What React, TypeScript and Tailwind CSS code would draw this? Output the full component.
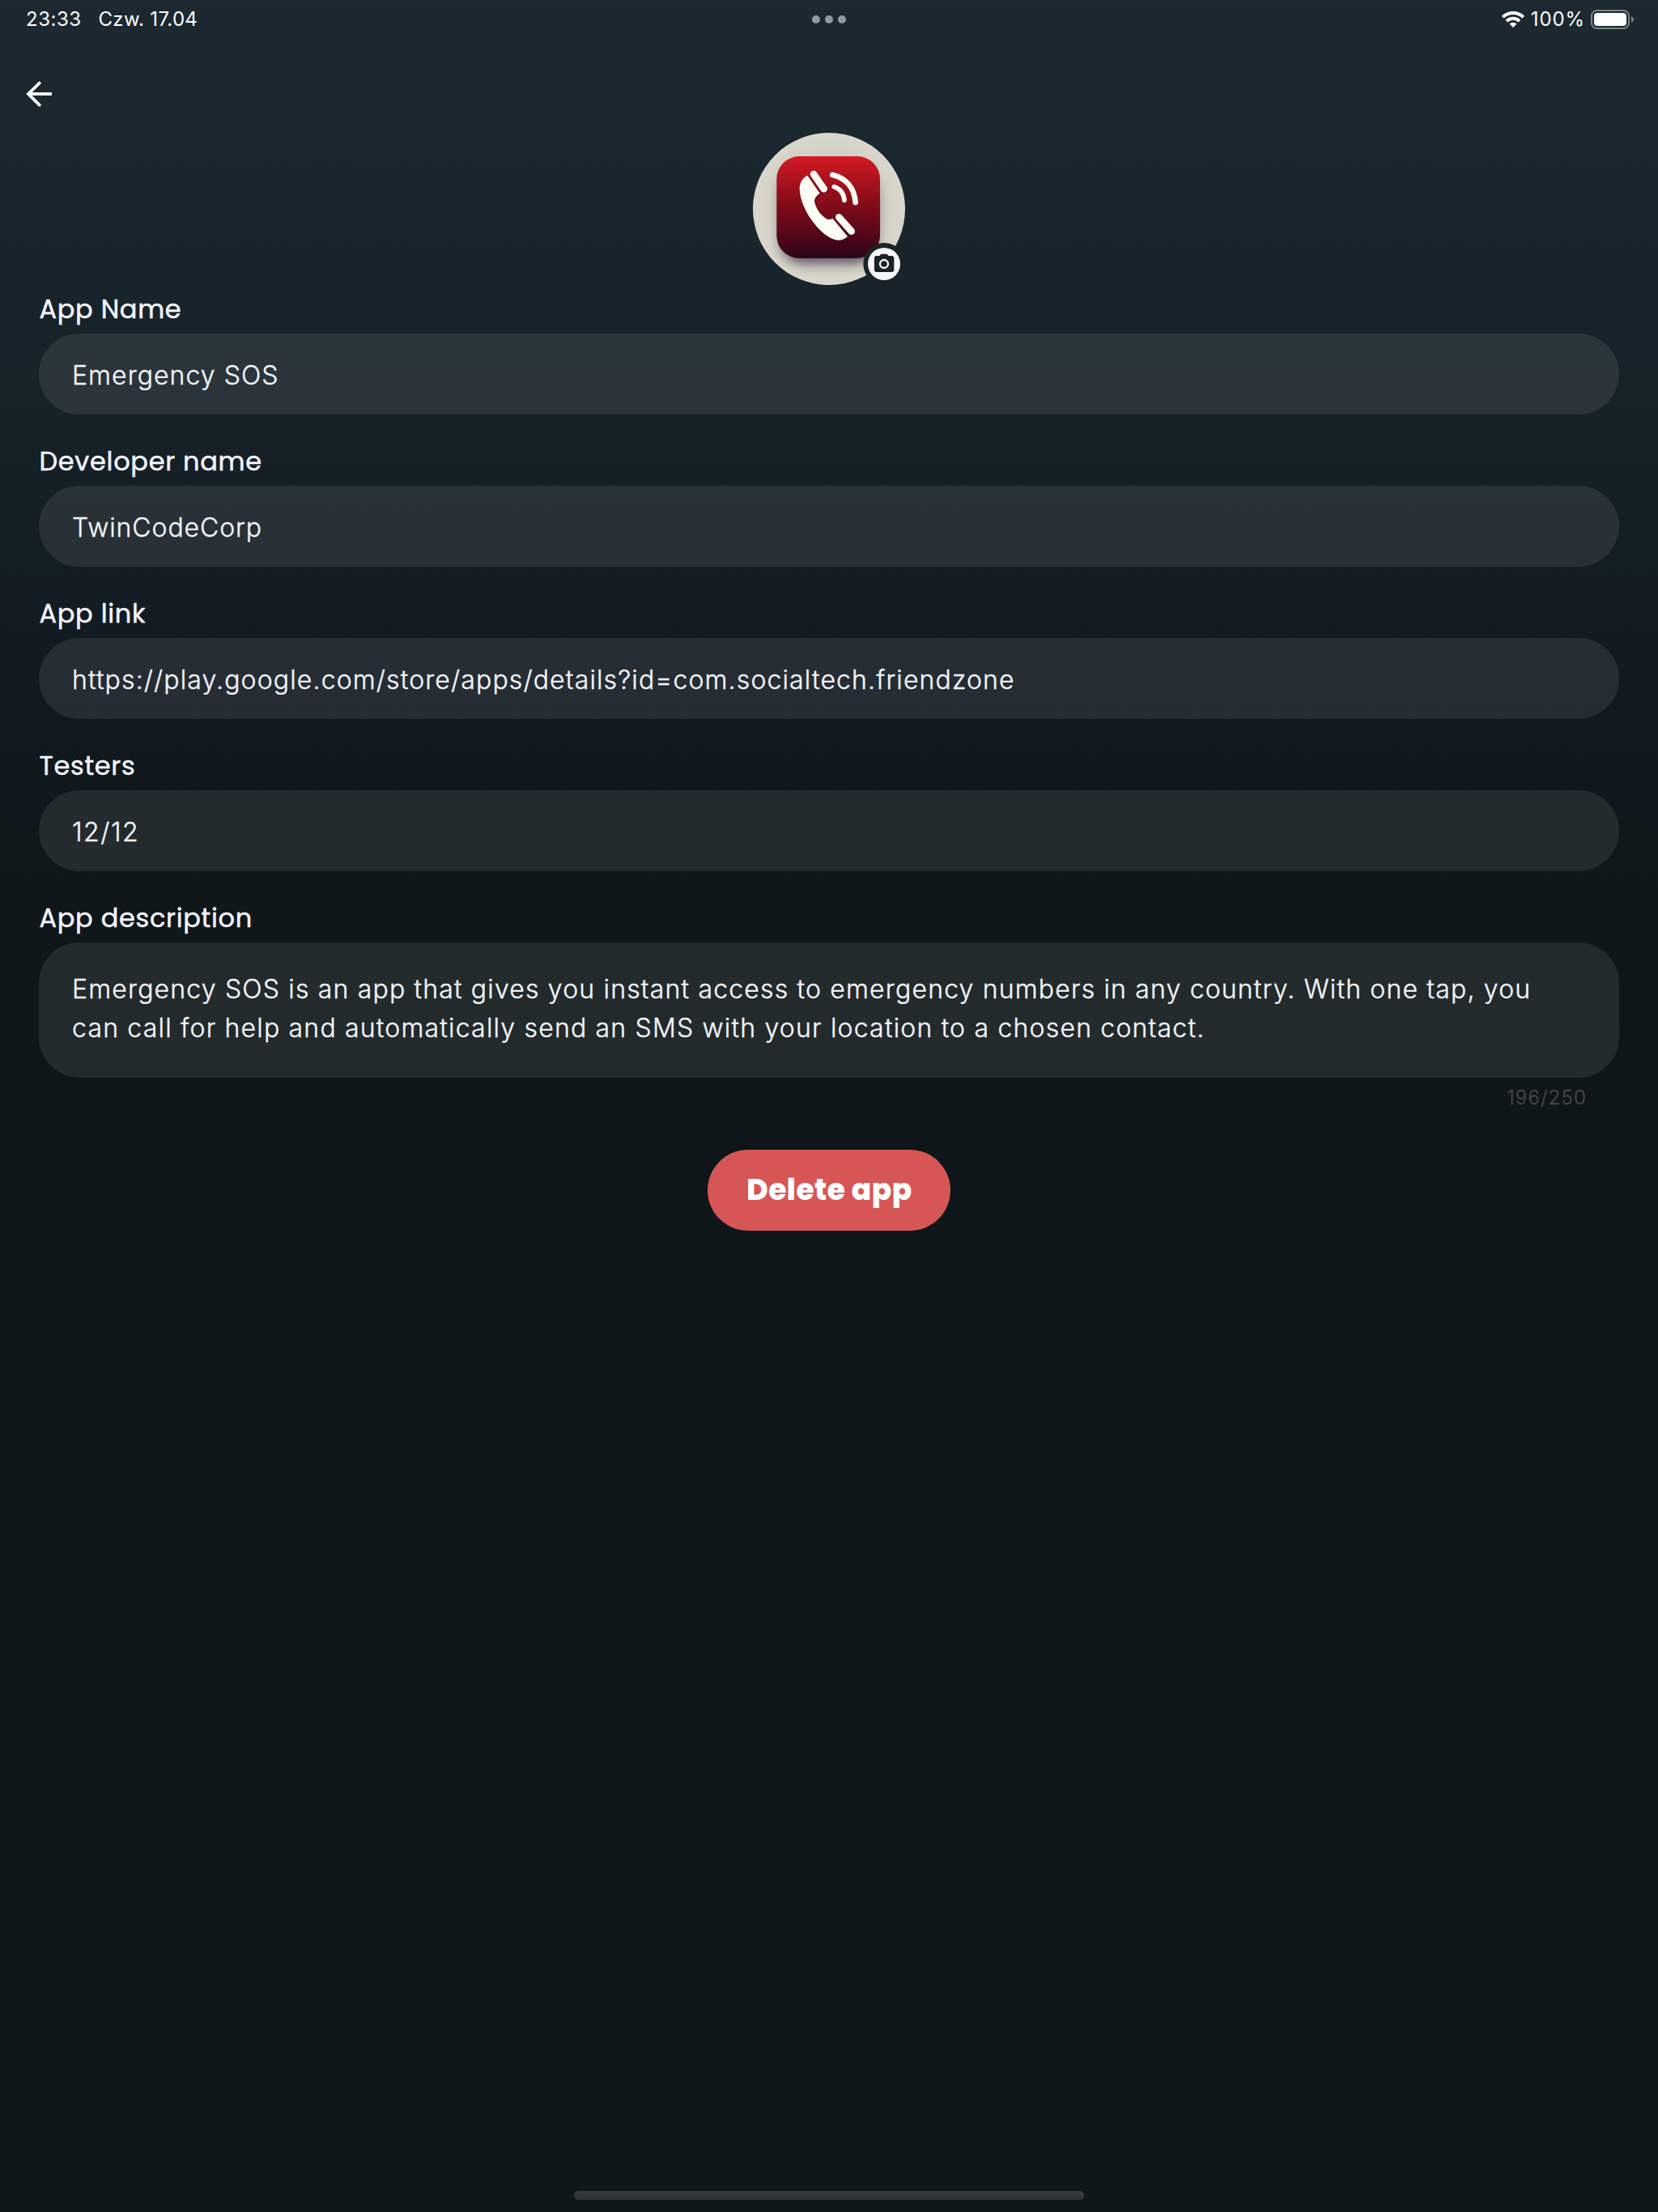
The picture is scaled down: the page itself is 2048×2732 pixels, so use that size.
function StatusBar() {
  return (
    <header className="flex h-12 items-center justify-between px-8 text-2xl font-normal text-white">
      <div className="flex w-[500px] gap-[21px]">
        <span className="tracking-[0.5px]">23:33</span>
        <span className="tracking-[0.3px]">Czw. 17.04</span>
      </div>
      <div className="flex gap-1.5">
        <span className="size-2.5 rounded-full bg-[#8f9ba2]" />
        <span className="size-2.5 rounded-full bg-[#8f9ba2]" />
        <span className="size-2.5 rounded-full bg-[#8f9ba2]" />
      </div>
      <div className="-mr-[3px] flex w-[503px] items-center justify-end">
        <svg viewBox="0 0 28 20" className="mr-2 h-5 w-7 shrink-0" fill="none" stroke="#fff" strokeWidth="4">
          <path d="M1.3 7.2 A18 18 0 0 1 26.7 7.2" />
          <path d="M6 12 A11.4 11.4 0 0 1 22 12" />
          <path d="M14 20 L9.6 15.6 A6.3 6.3 0 0 1 18.4 15.6 Z" fill="#fff" stroke="none" />
        </svg>
        <span className="mr-[7px] tracking-[0.9px]">100%</span>
        <svg viewBox="0 0 54 24" className="h-6 w-[54px] shrink-0">
          <rect x="1" y="1" width="46" height="22" rx="6.5" fill="none" stroke="#7b858b" strokeWidth="2" />
          <rect x="4" y="4" width="40" height="16" rx="4" fill="#fff" />
          <path d="M50 8 Q53 9.5 53 12 Q53 14.5 50 16 Z" fill="#7b858b" />
        </svg>
      </div>
    </header>
  );
}

const HANDSET =
  'M262 200 L308 266 Q288 280 288 296 Q298 340 335 362 Q345 364 356 360 L411 426 Q395 441 375 440 C340 438 300 400 270 355 C245 315 232 275 233 245 C235 222 246 208 262 200Z';

function AppLogo() {
  return (
    <svg viewBox="60 42 564 564" className="block size-[188px] overflow-visible">
      <defs>
        <linearGradient id="tile" x1="0" y1="0" x2="0" y2="1">
          <stop offset="0" stopColor="#d41a24" />
          <stop offset="0.25" stopColor="#a8121e" />
          <stop offset="0.55" stopColor="#760a18" />
          <stop offset="0.8" stopColor="#4e0718" />
          <stop offset="1" stopColor="#290519" />
        </linearGradient>
        <radialGradient id="disc" cx="0.5" cy="0.5" r="0.5">
          <stop offset="0" stopColor="#c9c5bd" />
          <stop offset="0.75" stopColor="#d3d0c6" />
          <stop offset="1" stopColor="#d9d6cb" />
        </radialGradient>
        <clipPath id="round">
          <circle cx="342" cy="324" r="282" />
        </clipPath>
        <filter id="soft" x="-30%" y="-30%" width="160%" height="160%">
          <feGaussianBlur stdDeviation="20" />
        </filter>
        <filter id="glow" x="-30%" y="-30%" width="160%" height="160%">
          <feGaussianBlur stdDeviation="5" />
        </filter>
      </defs>
      <circle cx="342" cy="324" r="282" fill="url(#disc)" />
      <g clipPath="url(#round)">
        <rect x="162" y="190" width="356" height="336" rx="84" fill="#262238" opacity="0.7" filter="url(#soft)" />
      </g>
      <rect x="148" y="129" width="383" height="378" rx="84" fill="url(#tile)" />
      <g filter="url(#glow)" opacity="0.5" fill="#3a0210" stroke="#3a0210" strokeLinecap="round" transform="translate(3 5)">
        <path strokeWidth="0" d={HANDSET} />
        <path d="M285 195 L323 250" strokeWidth="26" />
        <path d="M379 355 L425 407" strokeWidth="26" />
      </g>
      <g fill="#fdfdf5" stroke="#fdfdf5" strokeLinecap="round">
        <path strokeWidth="0" d={HANDSET} />
        <path d="M285 195 L323 250" strokeWidth="26" />
        <path d="M379 355 L425 407" strokeWidth="26" />
        <path d="M355 198 C405 210 436 246 440 300" strokeWidth="20" fill="none" />
        <path d="M361 242 C382 249 397 266 399 292" strokeWidth="17" fill="none" />
      </g>
      <circle cx="547" cy="528" r="78" fill="#1b2326" />
      <circle cx="546" cy="528" r="60" fill="#f6f6fc" />
      <path d="M518 498 H529 L535 491 H557 L563 498 H574 Q583 498 583 506 V550 Q583 558 574 558 H518 Q510 558 510 550 V506 Q510 498 518 498Z" fill="#1b2326" />
      <circle cx="546" cy="528" r="15" fill="none" stroke="#f6f6fc" strokeWidth="7" />
    </svg>
  );
}

function Label({ text }: { text: string }) {
  return (
    <div className="h-12 pl-[0.5px] font-[Poppins,Inter,sans-serif] text-[32px] leading-[48px] font-normal tracking-[0.7px] text-[#f6f6fc] [-webkit-text-stroke:0.45px_#f6f6fc]">
      {text}
    </div>
  );
}

function Field({ label, value, tracking }: { label: string; value: string; tracking: string }) {
  return (
    <section className="flex flex-col gap-1.5">
      <Label text={label} />
      <div className={`h-[100px] rounded-full bg-white/[0.085] pt-[28px] pr-10 pl-[41px] text-[32px] leading-[48px] text-[#f6f6fb] [-webkit-text-stroke:0.35px_#f6f6fb] ${tracking}`}>
        {value}
      </div>
    </section>
  );
}

export default function App() {
  return (
    <div className="flex h-[2732px] w-[2048px] flex-col bg-[linear-gradient(180deg,#1c2931_0px,#18242b_350px,#151f26_600px,#111920_900px,#0f181c_1000px,#0f171a_1120px,#0e1619_1366px,#0e1719_2732px)] font-[Inter,sans-serif] font-light">
      <StatusBar />
      <nav className="h-[116px] px-8 pt-[52px]">
        <svg viewBox="0 0 32 32" className="size-8" fill="none" stroke="#fff" strokeWidth="3.8">
          <path d="M3 16 H32" />
          <path d="M16.7 2.6 L3 16 L16.7 29.6" strokeLinecap="round" />
        </svg>
      </nav>
      <div className="flex h-[194px] justify-center">
        <AppLogo />
      </div>
      <main className="flex flex-col gap-[34px] px-12">
        <Field label="App Name" value="Emergency SOS" tracking="tracking-[1.05px]" />
        <Field label="Developer name" value="TwinCodeCorp" tracking="tracking-[0.9px]" />
        <Field
          label="App link"
          value="https://play.google.com/store/apps/details?id=com.socialtech.friendzone"
          tracking="tracking-[1.13px]"
        />
        <Field label="Testers" value="12/12" tracking="tracking-[1.5px]" />
        <section className="flex flex-col">
          <Label text="App description" />
          <p className="mt-1.5 h-[167px] rounded-[50px] bg-white/[0.085] pt-[34px] pr-10 pl-[41px] text-[32px] leading-[48px] tracking-[1.17px] text-[#f6f6fb] [-webkit-text-stroke:0.35px_#f6f6fb]">
            Emergency SOS is an app that gives you instant access to emergency numbers in any country. With one tap, you
            <br />
            <span className="tracking-[1.19px]">can call for help and automatically send an SMS with your location to a chosen contact.</span>
          </p>
          <div className="mt-[9px] h-8 pr-10 text-right text-2xl leading-8 tracking-[1.2px] text-[#46474c] [-webkit-text-stroke:0.3px_#46474c]">
            196/250
          </div>
        </section>
      </main>
      <button className="mt-12 h-[100px] w-[300px] self-center rounded-full bg-[#d65656] pl-px font-[Poppins,Inter,sans-serif] text-4xl leading-[100px] font-extrabold tracking-[0.5px] text-white">
        Delete app
      </button>
      <div className="mt-auto mb-[15px] h-[11px] w-[630px] self-center rounded-full bg-linear-to-b from-[#3a3e3f] to-[#2c3033]" />
    </div>
  );
}
